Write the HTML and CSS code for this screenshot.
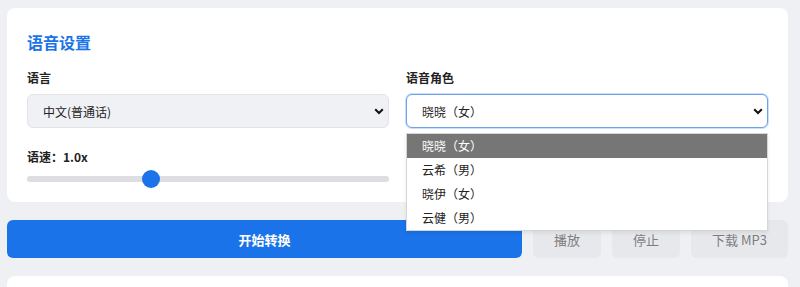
FILE: index.html
```html
<!DOCTYPE html>
<html lang="zh-CN">
<head>
    <meta charset="UTF-8">
    <meta name="viewport" content="width=device-width, initial-scale=1.0">
    <title>语音合成</title>
    <link rel="stylesheet" href="styles.css">
</head>
<body>

    <div class="page">
        <div class="card settings-card">
            <h2>语音设置</h2>
            <div class="settings-grid">
                <div class="field">
                    <label for="language">语言</label>
                    <select id="language" class="select-muted">
                        <option selected>中文(普通话)</option>
                    </select>
                </div>
                <div class="field voice-field">
                    <label for="voice">语音角色</label>
                    <select id="voice" class="select-focus">
                        <option selected>晓晓（女）</option>
                        <option>云希（男）</option>
                        <option>晓伊（女）</option>
                        <option>云健（男）</option>
                    </select>
                    <!-- open dropdown of the voice select -->
                    <ul class="dropdown">
                        <li class="active">晓晓（女）</li>
                        <li>云希（男）</li>
                        <li>晓伊（女）</li>
                        <li>云健（男）</li>
                    </ul>
                </div>
                <div class="field speed-field">
                    <label for="speed">语速：<span id="speedValue">1.0x</span></label>
                    <input type="range" id="speed" min="0.5" max="2" step="0.1" value="1">
                </div>
            </div>
        </div>

        <div class="actions">
            <button class="btn-primary">开始转换</button>
            <button class="btn-muted">播放</button>
            <button class="btn-muted">停止</button>
            <button class="btn-muted">下载 MP3</button>
        </div>

        <div class="card result-card"></div>
    </div>

</body>
</html>
```

FILE: styles.css
```css
/* Base Styles */

body {
    margin: 0;
    background-color: #eff0f3;
    font-family: "Noto Sans CJK SC", "Noto Sans", sans-serif;
    color: #222;
}

.page {
    padding: 8px 12px 0 7px;
}

.card {
    background-color: #fff;
    border-radius: 8px;
}

.settings-card {
    padding: 22px 20px 15px;
}

.settings-card h2 {
    margin: 0 0 15px;
    font-size: 16px;
    line-height: 24px;
    font-weight: 700;
    color: #1a73e8;
}

.settings-grid {
    display: grid;
    grid-template-columns: 1fr 1fr;
    column-gap: 17px;
}

.field label {
    display: block;
    font-size: 12px;
    line-height: 18px;
    font-weight: 700;
    margin-bottom: 7px;
}

.field select {
    width: 100%;
    height: 34px;
    padding: 0 30px 0 15px;
    font-family: inherit;
    font-size: 12px;
    color: #222;
    border-radius: 6px;
    appearance: none;
    background-image: url("data:image/svg+xml;utf8,<svg xmlns='http://www.w3.org/2000/svg' width='10' height='7' viewBox='0 0 10 7'><path d='M1.2 1.2 L5 5 L8.8 1.2' fill='none' stroke='%23111' stroke-width='2'/></svg>");
    background-repeat: no-repeat;
    background-position: right 4px center;
    outline: none;
}

.select-muted {
    background-color: #f0f1f4;
    border: 1px solid #e3e4e8;
}

.select-focus {
    background-color: #fff;
    border: 1px solid #6ea1ec;
    box-shadow: 0 0 0 1px rgba(110, 161, 236, 0.35);
}

.voice-field {
    position: relative;
}

.dropdown {
    position: absolute;
    top: 64px;
    left: 0;
    right: 0;
    margin: 0;
    padding: 0;
    list-style: none;
    background: #fff;
    border: 1px solid #d6d6d6;
    box-shadow: 0 2px 4px rgba(0, 0, 0, 0.08);
    z-index: 10;
}

.dropdown li {
    height: 24px;
    line-height: 24px;
    padding-left: 15px;
    font-size: 12px;
    color: #222;
}

.dropdown li.active {
    background-color: #767676;
    color: #fff;
}

.speed-field {
    margin-top: 20px;
}

.speed-field label {
    margin-bottom: 5px;
}

.speed-field input[type="range"] {
    display: block;
    width: 100%;
    height: 16px;
    margin: 0;
    appearance: none;
    background: transparent;
}

.speed-field input[type="range"]::-webkit-slider-runnable-track {
    height: 6px;
    border-radius: 3px;
    background: #dddee2;
}

.speed-field input[type="range"]::-webkit-slider-thumb {
    appearance: none;
    width: 18px;
    height: 18px;
    margin-top: -6px;
    border-radius: 50%;
    background: #1a73e8;
    border: none;
}

.actions {
    display: flex;
    gap: 11px;
    margin: 18px 0;
}

.actions button {
    height: 38px;
    border: none;
    border-radius: 6px;
    font-family: inherit;
    font-size: 13px;
    cursor: pointer;
}

.btn-primary {
    flex: 1;
    background-color: #1a73e8;
    color: #fff;
    font-weight: 700;
}

.btn-muted {
    padding: 0 21px;
    background-color: #e7e8ec;
    color: #7d7d7d;
}

.result-card {
    height: 11px;
    border-radius: 8px 8px 0 0;
}
```
